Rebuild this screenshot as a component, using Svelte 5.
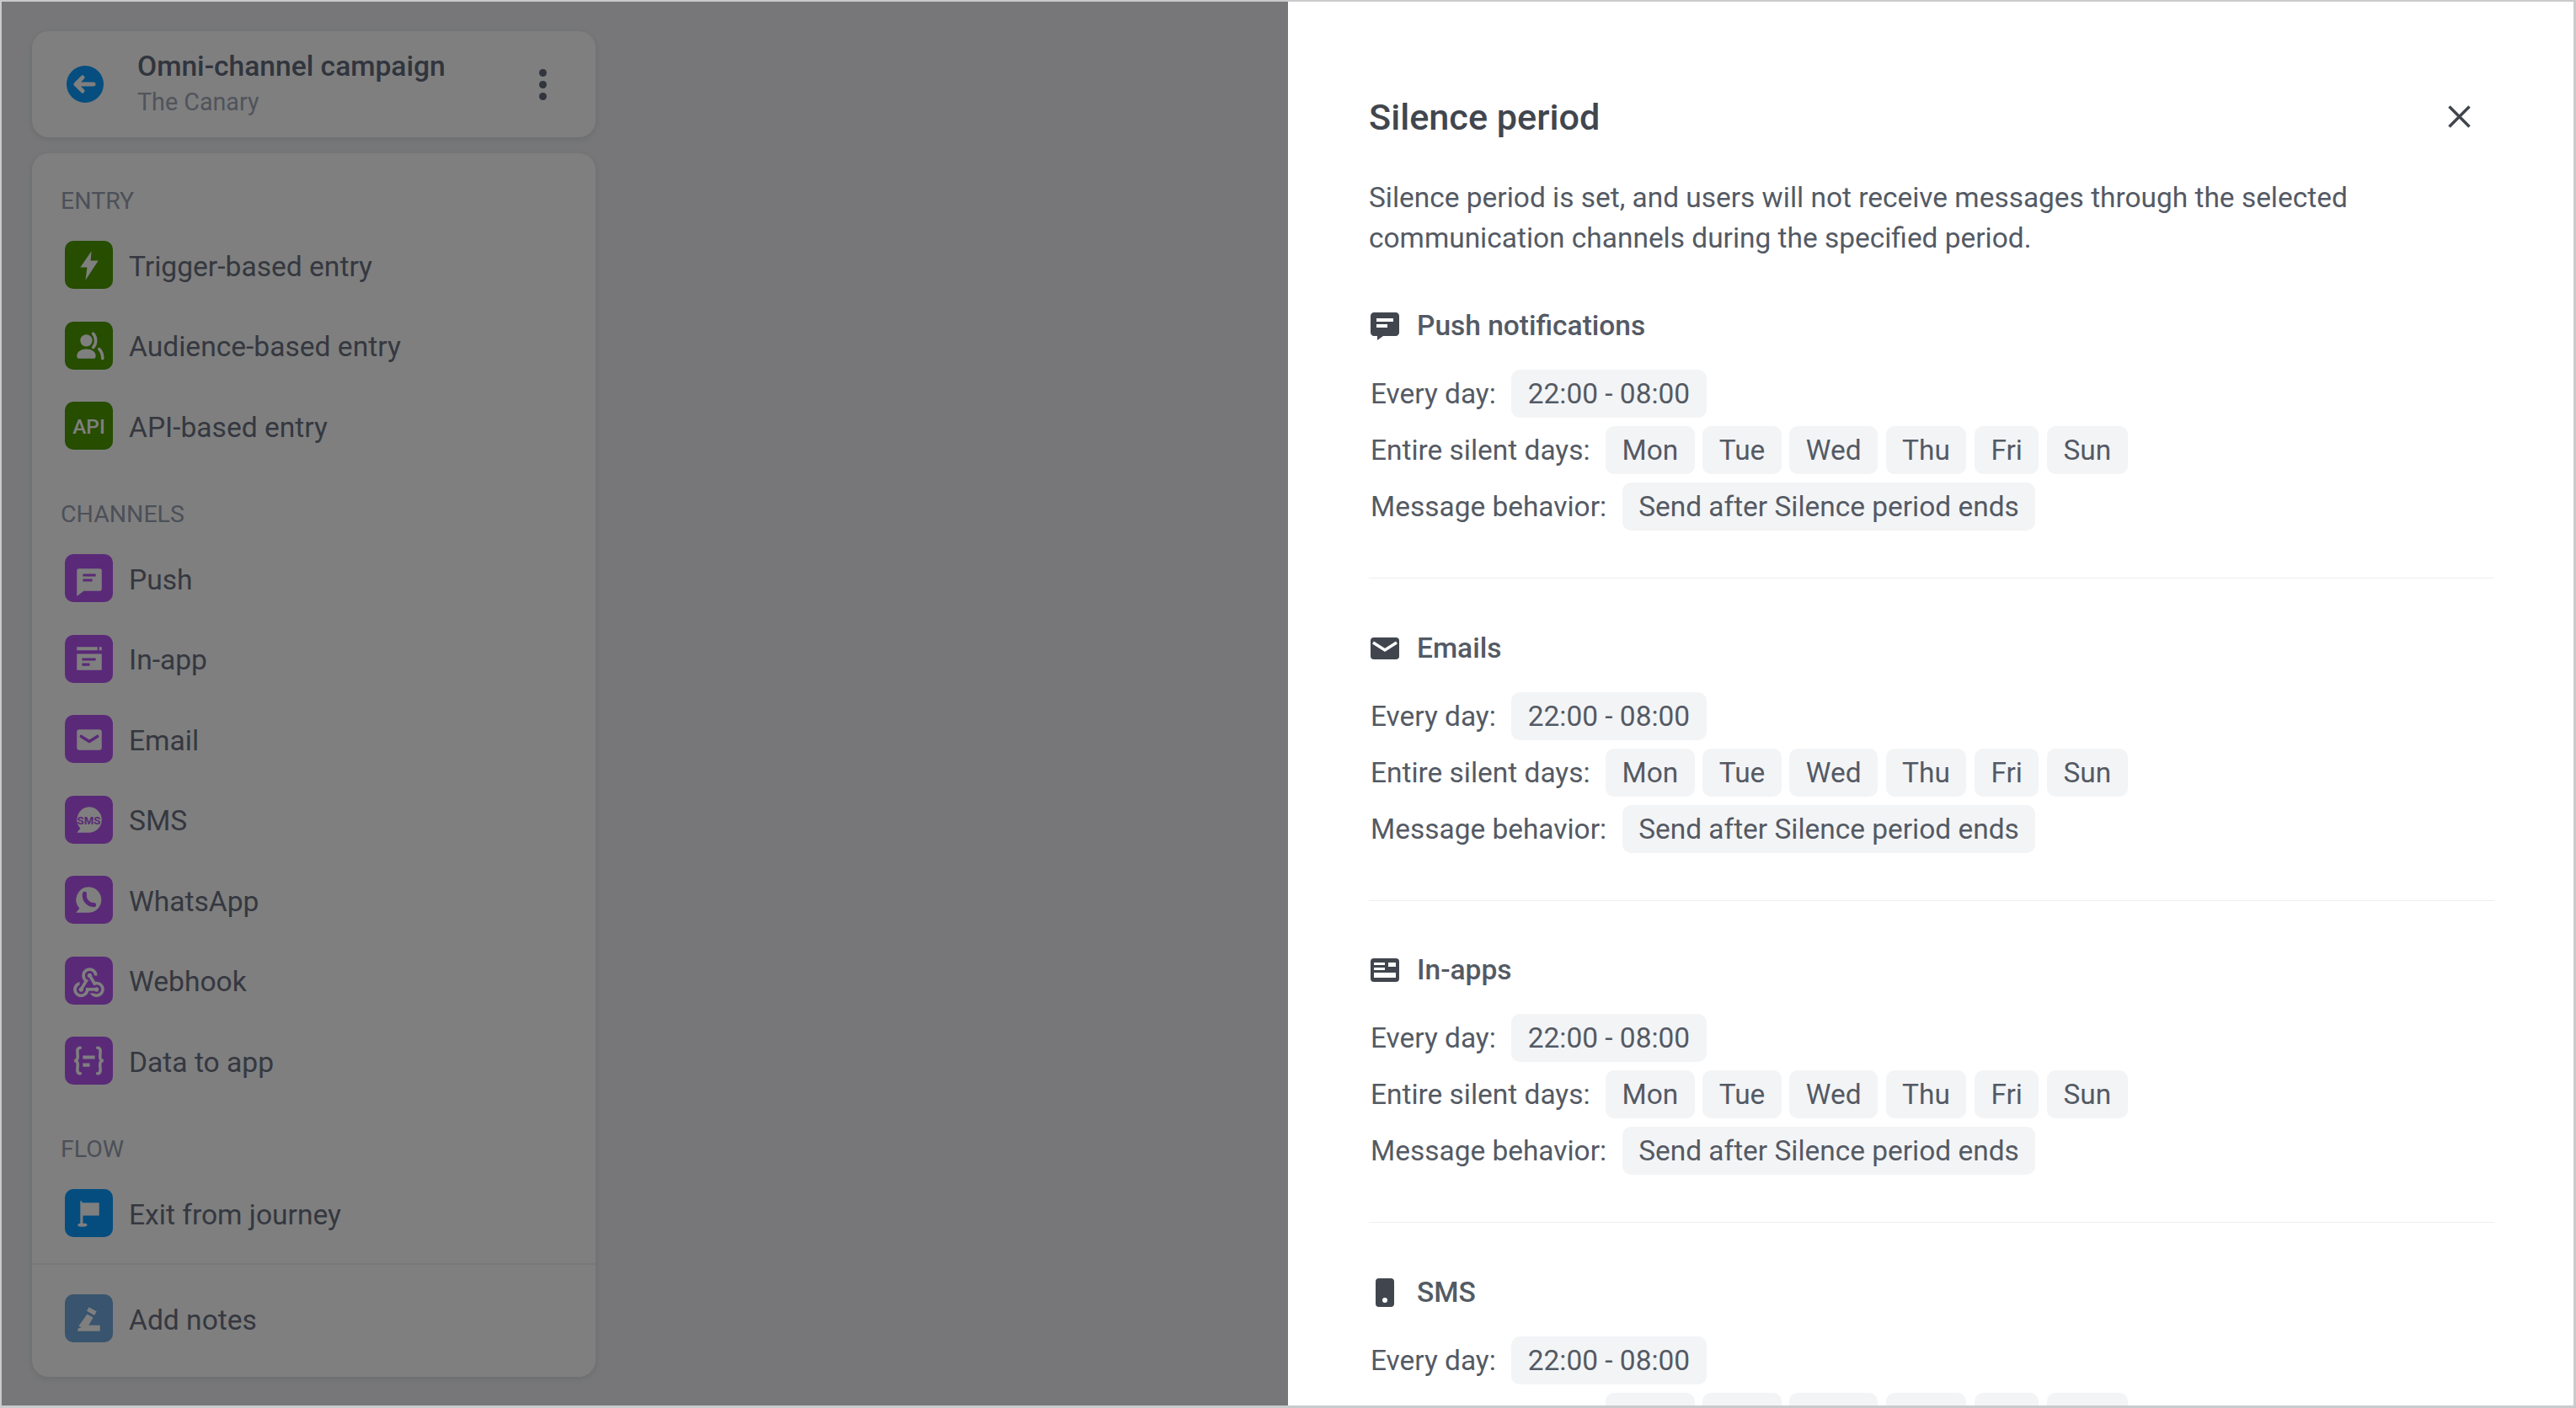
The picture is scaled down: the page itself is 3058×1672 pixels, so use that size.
<script>
  const groups = [
    { title: 'ENTRY', items: [
      { label: 'Trigger-based entry', icon: 'bolt', tone: 'green' },
      { label: 'Audience-based entry', icon: 'people', tone: 'green' },
      { label: 'API-based entry', icon: 'api', tone: 'green' }
    ]},
    { title: 'CHANNELS', items: [
      { label: 'Push', icon: 'push', tone: 'purple' },
      { label: 'In-app', icon: 'inapp', tone: 'purple' },
      { label: 'Email', icon: 'email', tone: 'purple' },
      { label: 'SMS', icon: 'sms', tone: 'purple' },
      { label: 'WhatsApp', icon: 'whatsapp', tone: 'purple' },
      { label: 'Webhook', icon: 'webhook', tone: 'purple' },
      { label: 'Data to app', icon: 'data', tone: 'purple' }
    ]},
    { title: 'FLOW', items: [
      { label: 'Exit from journey', icon: 'flag', tone: 'blue' }
    ]}
  ];
  const sections = [
    { name: 'Push notifications', icon: 'push' },
    { name: 'Emails', icon: 'mail' },
    { name: 'In-apps', icon: 'inapp' },
    { name: 'SMS', icon: 'phone' }
  ];
  const days = ['Mon', 'Tue', 'Wed', 'Thu', 'Fri', 'Sun'];
</script>

{#snippet glyph(name)}
  <svg class="glyph" viewBox="0 0 56 56" aria-hidden="true">
    {#if name === 'bolt'}
      <path class="w" d="M31 12 18 31h8l-2 15 15-23h-9z" />
    {:else if name === 'people'}
      <circle class="w" cx="25" cy="22" r="7" />
      <path class="w" d="M14 40c0-5 5-8 11-8s11 3 11 8c0 2-1 3-2 3H16c-1 0-2-1-2-3z" />
      <path class="l" d="M33 14c4 4 4 12 0 16M40 32c3 3 4 7 4 11" />
    {:else if name === 'api'}
      <text class="t" x="28" y="37" text-anchor="middle">API</text>
    {:else if name === 'push'}
      <path class="w" d="M16 17h25c1 0 2 1 2 2v22c0 1-1 2-2 2H22l-8 6V19c0-1 1-2 2-2z" />
      <path class="c" d="M21 23h15v3H21zM21 29h11v3H21z" />
    {:else if name === 'inapp'}
      <path class="w" d="M14 14h24v4H14zM40 14h3v4h-3zM14 22h29v19H14z" />
      <path class="c" d="M20 27h16v3H20zM20 33h9v3H20z" />
    {:else if name === 'email'}
      <rect class="w" x="14" y="17" width="29" height="24" rx="3" />
      <path class="k" d="M19 25l9.500 6 9.500-6" />
    {:else if name === 'sms'}
      <path class="w" d="M28 13a15 15 0 1 1 0 30H14l4-5a15 15 0 0 1 10-25z" />
      <text class="s" x="28" y="33" text-anchor="middle">SMS</text>
    {:else if name === 'whatsapp'}
      <path class="w" d="M28 13a15 15 0 1 1-1 30H13l4-5a15 15 0 0 1 11-25z" />
      <path class="k2" d="M23 21c-1 7 4 13 11 13" />
    {:else if name === 'webhook'}
      <path class="w" transform="translate(6.400 9.400) scale(1.800)" d="M10 15h5.880c.27-.31.620-.5 1.120-.5.830 0 1.500.670 1.500 1.500s-.670 1.500-1.500 1.500c-.5 0-.850-.190-1.120-.5H11.900c-.46 2.280-2.480 4-4.900 4-2.760 0-5-2.240-5-5 0-2.420 1.720-4.440 4-4.900v2.070C4.840 13.580 4 14.690 4 16c0 1.650 1.350 3 3 3s3-1.350 3-3v-1zm2.500-11c1.650 0 3 1.350 3 3h2c0-2.760-2.240-5-5-5s-5 2.240-5 5c0 1.430.600 2.710 1.560 3.620l-2.350 3.910c-.68.140-1.210.740-1.210 1.470 0 .830.670 1.500 1.500 1.500s1.500-.670 1.500-1.500c0-.160-.020-.310-.070-.450l3.380-5.630C10.350 9.830 9.500 8.510 9.500 7c0-1.650 1.350-3 3-3zm4.500 9c-.64 0-1.230.200-1.720.540l-3.050-5.060c-.710-.13-1.220-.740-1.220-1.470 0-.830.670-1.500 1.500-1.500s1.500.670 1.500 1.500c0 .150-.020.290-.060.420l2.190 3.640c.27-.05.560-.080.860-.080 2.760 0 5 2.240 5 5s-2.240 5-5 5c-1.850 0-3.470-1.010-4.330-2.500h2.670c.48.320 1.050.500 1.660.500 1.650 0 3-1.350 3-3s-1.350-3-3-3z" />
    {:else if name === 'data'}
      <path class="l" d="M18 13c-5 0-3 6-3 10s-1 5-4 5c3 0 4 1 4 5s-2 10 3 10M38 13c5 0 3 6 3 10s1 5 4 5c-3 0-4 1-4 5s2 10-3 10" />
      <path class="w" d="M21 22h14v4H21zM21 31h8v4h-8z" />
    {:else if name === 'flag'}
      <path class="w" d="M18 14h2v2h20v15H21v9h3c1 0 2 1 2 2s-2 2-4 2h-3c-3 0-4-1-4-2s1-2 3-2z" />
    {:else if name === 'note'}
      <path class="w" d="M26 23l7 4-8 14h-1l-8-4zM28 15l9 5-2.500 4.500-9-5zM26 36h15v7H15v-3z" />
    {/if}
  </svg>
{/snippet}

{#snippet headIcon(name)}
  <svg class="headicon" viewBox="0 0 34 34" aria-hidden="true">
    {#if name === 'push'}
      <path d="M4 1h26c2 0 4 2 4 4v20c0 2-2 4-4 4H15l-7 5v-5H4c-2 0-4-2-4-4V5c0-2 2-4 4-4z" />
      <path class="cut" d="M7 8h20v4H7zM7 15h13v4H7z" />
    {:else if name === 'mail'}
      <rect x="0" y="4" width="34" height="26" rx="4" />
      <path class="cutl" d="M3 10l14 9 14-9" />
    {:else if name === 'inapp'}
      <rect x="0" y="3" width="34" height="28" rx="4" />
      <path class="cut" d="M4 8h13v3H4zM21 8h9v5h-9zM4 14h13v3H4zM4 20h26v6H4z" />
    {:else if name === 'phone'}
      <rect x="6" y="0" width="22" height="34" rx="4" />
      <circle class="cut" cx="17" cy="26" r="3" />
    {/if}
  </svg>
{/snippet}

<div class="frame">
  <aside class="left">
    <header class="card top">
      <svg class="back" viewBox="0 0 44 44" aria-hidden="true">
        <circle cx="22" cy="22" r="22" />
        <path d="M32 22H11M19 14l-8 8 8 8" />
      </svg>
      <div class="titles">
        <div class="campaign">Omni-channel campaign</div>
        <div class="client">The Canary</div>
      </div>
      <div class="more"><i></i><i></i><i></i></div>
    </header>

    <nav class="card nav">
      {#each groups as g}
        <section class="group">
          <h3>{g.title}</h3>
          <ul>
            {#each g.items as it}
              <li>
                <span class="tile {it.tone}">{@render glyph(it.icon)}</span>
                <span class="lbl">{it.label}</span>
              </li>
            {/each}
          </ul>
        </section>
      {/each}
      <div class="foot">
        <div class="footitem">
          <span class="tile slate">{@render glyph('note')}</span>
          <span class="lbl">Add notes</span>
        </div>
      </div>
    </nav>
    <div class="scrim"></div>
  </aside>

  <main class="modal">
    <div class="modalhead">
      <h1>Silence period</h1>
      <svg class="close" viewBox="0 0 27 27" aria-hidden="true"><path d="M1.500 1.500l24 24M25.500 1.500l-24 24" /></svg>
    </div>
    <p class="desc">Silence period is set, and users will not receive messages through the selected communication channels during the specified period.</p>

    {#each sections as s, i}
      <section class="sec" class:ruled={i < sections.length - 1}>
        <div class="sechead">
          {@render headIcon(s.icon)}
          <h2>{s.name}</h2>
        </div>
        <div class="row"><span>Every day:</span><span class="chip">22:00 - 08:00</span></div>
        <div class="row">
          <span>Entire silent days:</span>
          <div class="chips">
            {#each days as d}<span class="chip">{d}</span>{/each}
          </div>
        </div>
        <div class="row"><span>Message behavior:</span><span class="chip">Send after Silence period ends</span></div>
      </section>
    {/each}
  </main>
</div>

<style>
  :global(body) { margin: 0; }
  .frame {
    box-sizing: border-box;
    width: 3058px;
    height: 1672px;
    display: flex;
    overflow: hidden;
    border: solid #c9cacc;
    border-width: 2px 3px 3px 2px;
    font-family: Roboto, sans-serif;
    background: #fff;
  }
  .left {
    position: relative;
    box-sizing: border-box;
    width: 1527px;
    flex: none;
    padding: 35px 36px 0;
    background: #eeeff3;
    color: #6b7080;
  }
  .scrim {
    position: absolute;
    inset: 0;
    background: rgba(0, 0, 0, 0.5);
  }
  .card {
    background: #fff;
    border-radius: 20px;
    box-shadow: 0 2px 8px rgba(0, 0, 0, 0.1);
    width: 669px;
  }
  .top {
    box-sizing: border-box;
    height: 126px;
    display: flex;
    align-items: center;
    padding: 0 58px 0 41px;
  }
  .back { width: 44px; height: 44px; flex: none; }
  .back circle { fill: #0a9dff; }
  .back path { fill: none; stroke: #fff; stroke-width: 5; stroke-linecap: round; stroke-linejoin: round; }
  .titles { margin-left: 40px; flex: 1; padding-bottom: 2px; }
  .campaign { font-size: 33.600px; font-weight: 500; line-height: 40px; color: #626a7a; }
  .client { font-size: 28.700px; line-height: 36px; margin-top: 4px; color: #a0a8b8; }
  .more { display: flex; flex-direction: column; gap: 5px; }
  .more i { width: 9px; height: 9px; border-radius: 50%; background: #626a7a; }
  .nav {
    box-sizing: border-box;
    height: 1453px;
    margin-top: 19px;
    padding: 37px 0 0;
  }
  .group { padding: 0 38px 0 34px; margin-bottom: 57px; }
  .group:last-of-type { margin-bottom: 31px; }
  h3 {
    margin: 0 0 27px;
    font-size: 28.500px;
    font-weight: 400;
    line-height: 40px;
    color: #98a0b0;
  }
  ul { list-style: none; margin: 0; padding: 0; display: flex; flex-direction: column; gap: 38.500px; }
  li, .footitem {
    display: flex;
    align-items: center;
    gap: 19px;
    height: 57px;
    margin-left: 5px;
    font-size: 33.600px;
  }
  .lbl { padding-top: 3px; }
  .tile {
    width: 57px;
    height: 57px;
    border-radius: 10px;
    flex: none;
    display: block;
    --tile: #888;
    background: var(--tile);
  }
  .green { --tile: #4c9a00; }
  .purple { --tile: #b455f0; }
  .blue { --tile: #0a9aff; }
  .slate { --tile: #70a8dc; }
  .glyph { width: 57px; height: 57px; display: block; }
  .w { fill: #fff; }
  .c { fill: var(--tile); }
  .k { fill: none; stroke: var(--tile); stroke-width: 3.500; stroke-linecap: round; stroke-linejoin: round; }
  .k2 { fill: none; stroke: var(--tile); stroke-width: 5; stroke-linecap: round; }
  .l { fill: none; stroke: #fff; stroke-width: 3.500; stroke-linecap: round; }
  .t { fill: #fff; font: 500 24px Roboto, sans-serif; }
  .s { fill: var(--tile); font: 700 13px Roboto, sans-serif; }
  .foot {
    border-top: 2px solid #f0f0f2;
    padding: 35px 38px 0 34px;
  }

  .modal {
    flex: 1;
    min-width: 0;
    box-sizing: border-box;
    padding: 113px 94px 0 96px;
    color: #545a64;
  }
  .modalhead {
    display: flex;
    justify-content: space-between;
    align-items: center;
    height: 50px;
    padding-right: 28px;
  }
  h1 { margin: 0; font-size: 43.200px; font-weight: 500; line-height: 50px; color: #41464e; }
  .close { width: 27px; height: 27px; margin-top: -4px; }
  .close path { fill: none; stroke: #41464e; stroke-width: 3.500; }
  .desc {
    margin: 46px 0 0;
    width: 1200px;
    font-size: 33.450px;
    line-height: 47.500px;
  }
  .sec { padding-top: 61px; }
  .sec + .sec { padding-top: 62.500px; }
  .ruled { padding-bottom: 46px; border-bottom: 1.500px solid #eceef0; }
  .sechead { display: flex; align-items: center; height: 40px; gap: 21px; margin: 0 0 32px 2px; }
  .headicon { width: 34px; height: 34px; fill: #41464e; flex: none; }
  .cut { fill: #fff; }
  .cutl { fill: none; stroke: #fff; stroke-width: 3.500; }
  h2 { margin: 0; font-size: 33.500px; font-weight: 500; line-height: 40px; color: #545a64; }
  .row {
    display: flex;
    align-items: center;
    gap: 18.500px;
    height: 57px;
    margin: 0 0 10px 2px;
    font-size: 33.450px;
  }
  .chips { display: flex; gap: 9.500px; }
  .chip {
    box-sizing: border-box;
    height: 57px;
    line-height: 57px;
    padding: 0 19.500px;
    border-radius: 10px;
    background: #f3f4f6;
  }
</style>
